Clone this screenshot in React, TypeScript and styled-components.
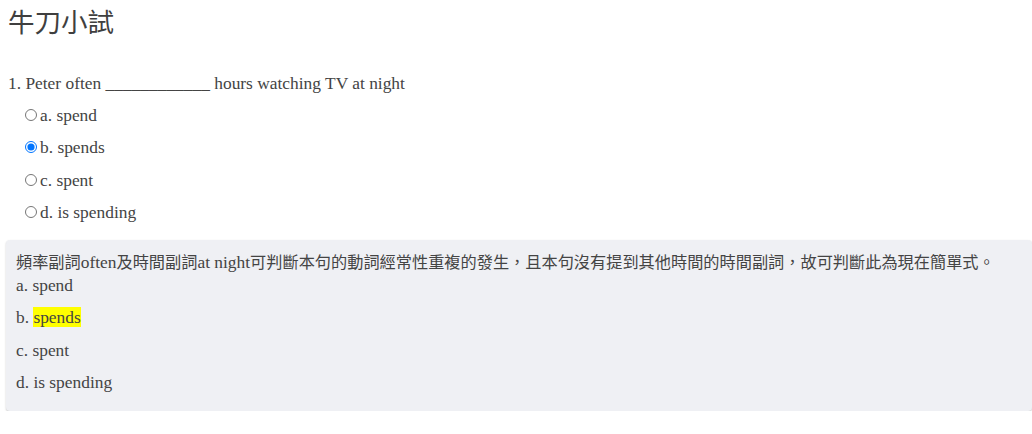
import React from "react";
import styled, { createGlobalStyle } from "styled-components";

const Global = createGlobalStyle`
  html, body { margin: 0; padding: 0; background: #fff; }
  body { font-family: "Liberation Serif", "Noto Sans CJK TC", serif; color: #444; }
`;

const Page = styled.div`
  padding: 0 0 0 6px;
`;

const Title = styled.h1`
  margin: 0;
  padding: 5px 0 0 2px;
  font-family: "Noto Sans CJK TC", sans-serif;
  font-weight: 400;
  font-size: 26.5px;
  line-height: 32px;
  color: #3f3f3f;
`;

const Question = styled.div`
  margin-top: 35px;
  padding-left: 2px;
  font-size: 17.4px;
  line-height: 22px;
`;

const Options = styled.div`
  display: flex;
  flex-direction: column;
  gap: 10.3px;
  margin-top: 10px;
  padding-left: 19px;
`;

const Option = styled.label`
  display: flex;
  align-items: center;
  font-size: 17.4px;
  line-height: 22px;
  input { margin: 0 3px 0 0; width: 12px; height: 12px; }
`;

const Explain = styled.div`
  margin-top: 17px;
  background: #eff0f4;
  border-radius: 4px;
  box-shadow: 0 1px 2px rgba(0,0,0,0.22);
  padding: 9px 10px 18px 10px;
  font-size: 17.4px;
`;

const Note = styled.div`
  font-family: "Noto Sans CJK TC", sans-serif;
  font-size: 16.2px;
  line-height: 24px;
  span.en { font-family: "Liberation Serif", serif; font-size: 17.4px; }
`;

const Line = styled.div`
  line-height: 22px;
  & + & { margin-top: 10.4px; }
`;

const Mark = styled.span`
  background: #ffff00;
`;

const opts = ["a. spend", "b. spends", "c. spent", "d. is spending"];

export default function App() {
  return (
    <>
      <Global />
      <Page>
        <Title>牛刀小試</Title>
        <Question>1. Peter often ____________ hours watching TV at night</Question>
        <Options>
          {opts.map((o, i) => (
            <Option key={o}>
              <input type="radio" name="q1" defaultChecked={i === 1} />
              {o}
            </Option>
          ))}
        </Options>
        <Explain>
          <Note>
            頻率副詞<span className="en">often</span>及時間副詞<span className="en">at night</span>可判斷本句的動詞經常性重複的發生，且本句沒有提到其他時間的時間副詞，故可判斷此為現在簡單式。
          </Note>
          <Line>a. spend</Line>
          <Line>b. <Mark>spends</Mark></Line>
          <Line>c. spent</Line>
          <Line>d. is spending</Line>
        </Explain>
      </Page>
    </>
  );
}
